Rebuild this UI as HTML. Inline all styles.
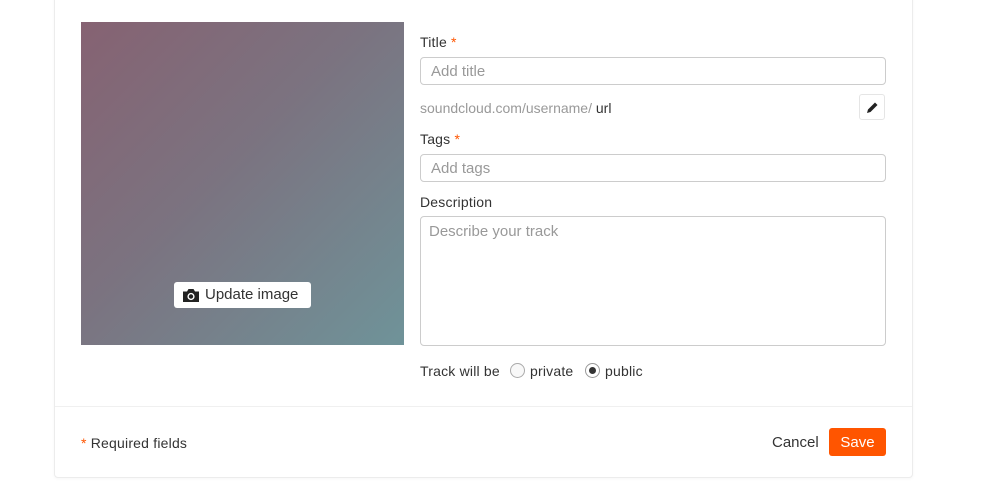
<!DOCTYPE html>
<html><head><style>
*{box-sizing:border-box;margin:0;padding:0}
body{width:1000px;height:500px;background:#fff;font-family:"Liberation Sans",sans-serif;color:#333;position:relative;overflow:hidden}
.card{position:absolute;left:54px;top:-5px;width:859px;height:483px;border:1px solid #ececec;border-radius:4px;background:#fff;box-shadow:0 1px 3px rgba(0,0,0,.04)}
.abs{position:absolute}
.img{left:81px;top:22px;width:323px;height:323px;background:linear-gradient(135deg,#866272 0%,#7b7380 45%,#6f9399 100%)}
.btn{left:174px;top:282px;width:137px;height:26px;background:#fff;border-radius:3px;font-size:15px;line-height:26px;padding-left:31px;color:#333}
.lbl{font-size:14px;color:#333;letter-spacing:.2px}
.req{color:#f50;}
.inp{border:1px solid #ccc;border-radius:4px;background:#fff;font-size:15px;color:#999;padding-left:10px}
</style></head><body>
<div class="card"></div>
<div class="abs img"></div>
<div class="abs btn"><svg class="abs" style="left:8px;top:6px" width="18" height="15" viewBox="0 0 18 15"><path d="M1 3.5h4l1.5-2.5h5L13 3.5h4V14H1z" fill="#222"/><circle cx="9" cy="8.5" r="3.6" fill="#fff"/><circle cx="9" cy="8.5" r="2.2" fill="#222"/></svg>Update image</div>
<div class="abs lbl" style="left:420px;top:34px">Title <span class="req">*</span></div>
<div class="abs inp" style="left:420px;top:57px;width:466px;height:28px;line-height:27px">Add title</div>
<div class="abs" style="left:420px;top:100px;font-size:14px;color:#999">soundcloud.com/username/ <span style="color:#333">url</span></div>
<div class="abs" style="left:859px;top:94px;width:26px;height:26px;border:1px solid #e5e5e5;border-radius:3px"><svg class="abs" style="left:5px;top:5px" width="15" height="15" viewBox="0 0 15 15"><path d="M2 13l1-3.5 7-7 2.5 2.5-7 7z" fill="#222"/></svg></div>
<div class="abs lbl" style="left:420px;top:131px">Tags <span class="req">*</span></div>
<div class="abs inp" style="left:420px;top:154px;width:466px;height:28px;line-height:27px">Add tags</div>
<div class="abs lbl" style="left:420px;top:194px">Description</div>
<div class="abs inp" style="left:420px;top:216px;width:466px;height:130px;padding:6px 8px;line-height:18px">Describe your track</div>
<div class="abs lbl" style="left:420px;top:363px">Track will be</div>
<div class="abs" style="left:510px;top:363px;width:15px;height:15px;border:1px solid #aaa;border-radius:50%;background:#f8f8f8"></div>
<div class="abs lbl" style="left:530px;top:363px">private</div>
<div class="abs" style="left:585px;top:363px;width:15px;height:15px;border:1px solid #999;border-radius:50%;background:#fff"><div class="abs" style="left:3px;top:3px;width:7px;height:7px;border-radius:50%;background:#333"></div></div>
<div class="abs lbl" style="left:605px;top:363px">public</div>
<div class="abs" style="left:55px;top:406px;width:857px;height:1px;background:#f0f0f0"></div>
<div class="abs lbl" style="left:81px;top:435px"><span class="req">*</span> Required fields</div>
<div class="abs" style="left:772px;top:434px;font-size:15px;color:#333">Cancel</div>
<div class="abs" style="left:829px;top:428px;width:57px;height:28px;background:#f50;border-radius:3px;color:#fff;font-size:15px;line-height:29px;text-align:center">Save</div>
</body></html>
